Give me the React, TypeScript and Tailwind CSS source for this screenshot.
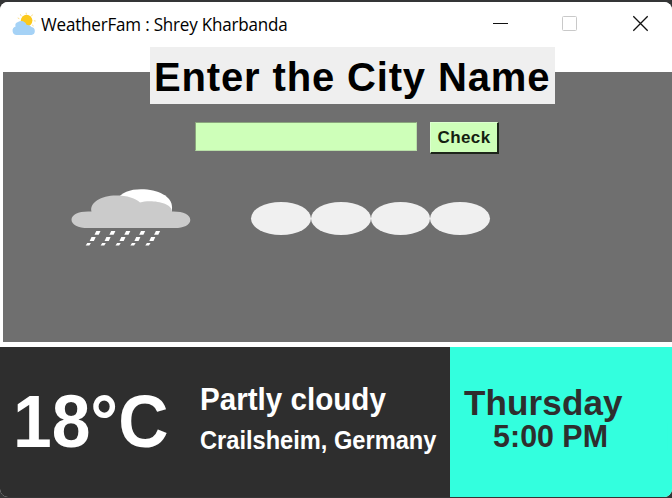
import React from "react";

function AppIcon() {
  return (
    <svg className="h-6 w-6 shrink-0" viewBox="0 0 24 24">
      <g stroke="#f8d877" strokeWidth="0.9" strokeLinecap="round">
        <path d="M14.2 1.1V2M8.5 2.6l.5 1M20.3 2.9l-.6.9M7 6.5l-.9-.4M22.3 8.8l1 .2M20.5 13.2l.8.6" />
      </g>
      <circle cx="14.6" cy="8.6" r="5.8" fill="#fcc91c" />
      <path
        d="M4.6 23a4.3 4.3 0 0 1-1-8.4A3.6 3.6 0 0 1 6 10A5.8 5.8 0 0 1 14.8 13a4.4 4.4 0 0 1 4.6 2.1A4 4 0 0 1 19.5 23Z"
        fill="#a5d2f6"
      />
    </svg>
  );
}

function TitleBar() {
  return (
    <header className="flex h-[45px] shrink-0 items-start bg-white pl-[12px]">
      <div className="pt-[10px]">
        <AppIcon />
      </div>
      <h1 className="ml-[5px] mt-[9px] grow origin-left scale-x-[0.946] whitespace-nowrap font-['Open_Sans',sans-serif] text-[18px] font-normal leading-[27px] tracking-[-0.2px] text-black">
        WeatherFam : Shrey Kharbanda
      </h1>
      <svg className="mt-[13px] h-[18px] w-[180px] shrink-0" viewBox="0 0 180 18" fill="none">
        <path d="M1 8.5h15" stroke="#111" />
        <rect x="70.5" y="1.5" width="14" height="14" rx="1" stroke="#c9c9c9" />
        <path d="M141.3 1.3l14.4 14.4M155.7 1.3l-14.4 14.4" stroke="#111" strokeWidth="1.3" />
      </svg>
    </header>
  );
}

const dropRows = [
  { y: 232.8, x: 97.5, rx: 3, ry: 1.9 },
  { y: 239, x: 92.7, rx: 3, ry: 1.9 },
  { y: 244.3, x: 88.3, rx: 2.6, ry: 1.2 },
];

function RainCloud() {
  return (
    <svg className="h-[60px] w-[122px]" viewBox="70 187 122 60">
      <path d="M117 200C121 192.5 130 189.3 141 189.3c17 0 31 7 31 18V216h-40Z" fill="#fff" />
      <path
        d="M88 228c-10 0-16.5-3.5-16.5-8.3s6.5-8.2 16.5-8.2h3.5C89 203 101 195.4 116 195.4c11 0 20 2.6 24 7.2 10-3.2 32-.5 32 9 11-.3 18.3 3.2 18.3 8.3 0 4.9-6.8 8.1-15.3 8.1Z"
        fill="#cbcbcb"
      />
      <g fill="#fff">
        {dropRows.map((row) =>
          [0, 1, 2, 3, 4].map((i) => (
            <path
              key={`${row.y}-${i}`}
              transform={`translate(${row.x + i * 14.9} ${row.y})`}
              d={`M${-row.rx} ${row.ry}L${-row.rx / 2.5} ${-row.ry}H${row.rx}L${row.rx / 2.5} ${row.ry}Z`}
            />
          )),
        )}
      </g>
    </svg>
  );
}

export default function App() {
  return (
    <div className="h-[498px] w-[672px] overflow-hidden bg-[#343536] pt-[2px] font-['Liberation_Sans',Arial,sans-serif] font-bold">
      <div className="flex h-[495px] flex-col overflow-hidden rounded-[8px] bg-white">
        <TitleBar />

        <main className="ml-[3px] mt-[25px] flex h-[270px] shrink-0 flex-col bg-[#6f6f6f]">
          <h2 className="-mt-[25px] ml-[147px] h-[57px] w-[405px] whitespace-nowrap bg-[#efefef] pl-[4px] pt-[2px] text-[40px] leading-[57px] tracking-[0.85px] text-black">
            Enter the City Name
          </h2>

          <form className="ml-[192px] mt-[18px] flex h-[32px] items-start gap-[13px]">
            <input
              aria-label="City"
              className="h-[29px] w-[222px] border border-[#8aa57d] border-b-[#b9dfa8] border-r-[#b9dfa8] bg-[#ceffb9] px-1 outline-none"
            />
            <button
              type="button"
              className="h-[32px] w-[69px] whitespace-nowrap border border-b-2 border-r-2 border-[#dcffcf] border-b-[#1c2419] border-r-[#1c2419] bg-[#ceffb9] text-[17px] leading-[29px] tracking-[0.4px] text-[#142010]"
            >
              Check
            </button>
          </form>

          <section className="ml-[67px] mt-[33px] flex h-[60px]">
            <RainCloud />
            <div className="ml-[59px] mt-[15px] flex">
              <span className="h-[33px] w-[59.8px] rounded-[50%] bg-[#f0f0f0]" />
              <span className="h-[33px] w-[59.8px] rounded-[50%] bg-[#f0f0f0]" />
              <span className="h-[33px] w-[59.8px] rounded-[50%] bg-[#f0f0f0]" />
              <span className="h-[33px] w-[59.8px] rounded-[50%] bg-[#f0f0f0]" />
            </div>
          </section>
        </main>

        <footer className="mt-[5px] flex h-[150px] shrink-0 whitespace-nowrap">
          <section className="flex w-[450px] bg-[#2e2e2e] pl-[13px] text-white">
            <p className="w-[187px] origin-left scale-x-[0.94] pt-[35px] text-[74px] leading-[80px]">18°C</p>
            <div className="pt-[32px]">
              <p className="origin-left scale-x-[0.925] text-[32px] leading-[40px]">Partly cloudy</p>
              <p className="origin-left scale-x-[0.945] text-[25px] leading-[42px]">Crailsheim, Germany</p>
            </div>
          </section>
          <section className="w-[222px] bg-[#33ffde] pt-[38px] text-[#2e2e2e]">
            <p className="h-[38px] pl-[14px] text-[35px] leading-[36px] tracking-[0.15px]">Thursday</p>
            <p className="origin-left scale-x-[0.98] bg-[#33ffde] pl-[44px] text-[31px] leading-[27px]">5:00 PM</p>
          </section>
        </footer>
      </div>
    </div>
  );
}
